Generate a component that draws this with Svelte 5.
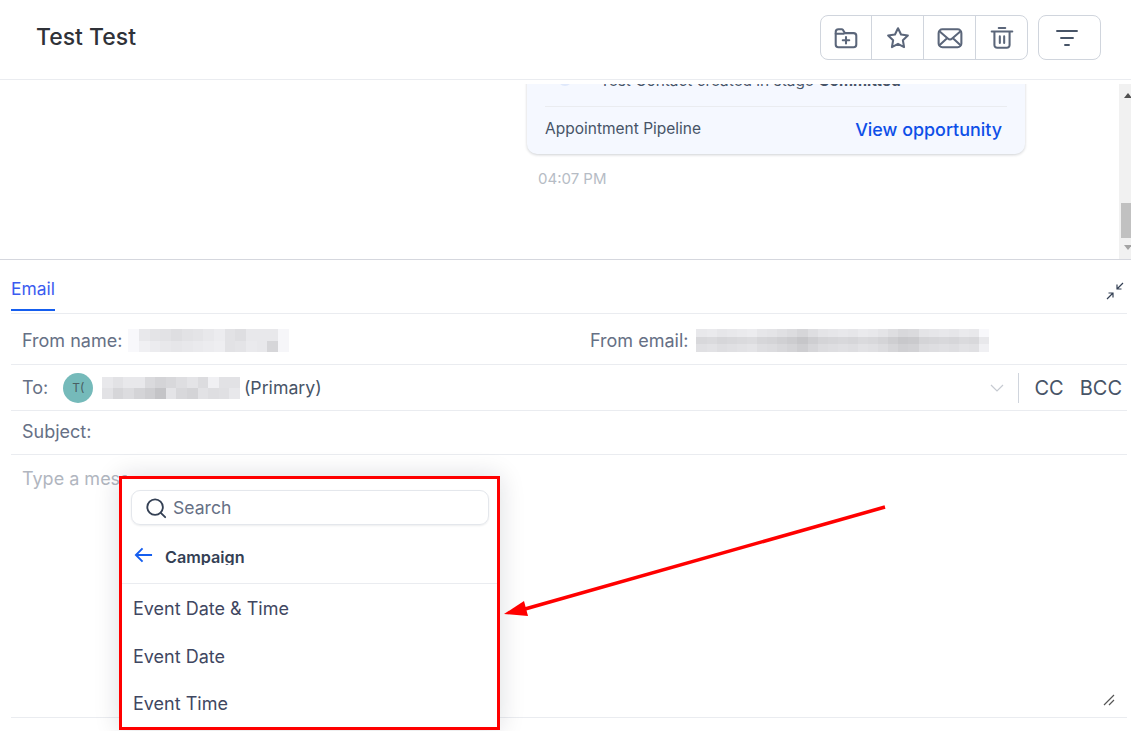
<script>
  const toCell = (v) => `rgb(${v},${v},${v + 3})`

  const nameBlur = [
    [248, 232, 228, 226, 222, 226, 228, 232, 236, 226, 222, 232, 232, 232, 246],
    [248, 240, 236, 232, 230, 232, 234, 236, 238, 226, 228, 234, 232, 214, 246]
  ]
  const emailBase = [216, 218, 214, 216, 218, 220, 214, 212, 208, 204, 198, 206, 212, 214, 216, 214, 218, 216, 212, 206, 200, 202, 212, 214, 216, 214, 218, 216, 232]
  const emailBlur = [
    emailBase.map((v) => Math.min(v + 16, 250)),
    emailBase,
    emailBase.map((v) => Math.min(v + 8, 246))
  ]
  const toBlur = [
    [232, 226, 232, 232, 218, 212, 216, 222, 228, 220, 240, 226, 226],
    [226, 214, 220, 212, 206, 196, 228, 216, 212, 226, 222, 224, 232]
  ]
  const items = ['Event Date & Time', 'Event Date', 'Event Time']
</script>

<div class="page">
  <header class="top">
    <h1>Test Test</h1>
    <div class="actions">
      <div class="group">
        <button aria-label="Move to folder">
          <svg viewBox="0 0 24 24"><path d="M2.5 7V18a2.5 2.5 0 0 0 2.5 2.5H19a2.5 2.5 0 0 0 2.5-2.5V10A2.5 2.5 0 0 0 19 7.5H11L9.2 4.6A1.5 1.5 0 0 0 8 4H5A2.5 2.5 0 0 0 2.5 6.5V10"/><path d="M2.5 8H10M12 11v6M9 14h6"/></svg>
        </button>
        <button aria-label="Star">
          <svg viewBox="0 0 24 24"><path d="M12 3l2.8 5.8 6.3.9-4.6 4.4 1.1 6.3L12 17.4l-5.6 3 1.1-6.3-4.6-4.4 6.3-.9z"/></svg>
        </button>
        <button aria-label="Mail">
          <svg viewBox="0 0 24 24"><rect x="1.5" y="4" width="21" height="16.5" rx="3.5"/><path d="M2.5 6l7.5 6.5a3 3 0 0 0 4 0L21.5 6M2.5 18.5l6.5-6M21.5 18.5l-6.5-6"/></svg>
        </button>
        <button aria-label="Delete">
          <svg viewBox="0 0 24 24"><path d="M2.5 6h19M9 2.8h6M5 6v12.5A2.5 2.5 0 0 0 7.5 21h9a2.5 2.5 0 0 0 2.5-2.5V6M10 10.5v6M14 10.5v6"/></svg>
        </button>
      </div>
      <button class="filter" aria-label="Filter">
        <svg viewBox="0 0 24 24"><path d="M2 5h20M6 12h12M10 19h4"/></svg>
      </button>
    </div>
  </header>

  <section class="thread">
    <div class="scroller">
      <div class="card">
        <p class="stage">
          <i class="stage-icon"></i>
          <span>Test Contact created in stage <b>Committed</b></span>
        </p>
        <div class="card-foot">
          <span>Appointment Pipeline</span>
          <a href="#top">View opportunity</a>
        </div>
      </div>
      <time>04:07 PM</time>
    </div>
    <div class="scrollbar">
      <i class="up"></i>
      <i class="thumb"></i>
      <i class="down"></i>
    </div>
  </section>

  <section class="composer">
    <div class="tabs">
      <span class="tab">Email</span>
      <svg class="shrink" viewBox="0 0 18 18"><path d="M17 1l-6 6M11 2.5V7h4.5M1 17l6-6M7 15.5V11H2.5"/></svg>
    </div>

    <div class="row from">
      <div class="half">
        <label>From name:</label>
        <div class="blur">
          {#each nameBlur as line}
            <div class="blur-line">
              {#each line as v}<i style="background:{toCell(v)}"></i>{/each}
            </div>
          {/each}
        </div>
      </div>
      <div class="half email">
        <label>From email:</label>
        <div class="blur">
          {#each emailBlur as line}
            <div class="blur-line fine">
              {#each line as v}<i style="background:{toCell(v)}"></i>{/each}
            </div>
          {/each}
        </div>
      </div>
    </div>

    <div class="row to">
      <label>To:</label>
      <span class="avatar">T(</span>
      <div class="blur">
        {#each toBlur as line}
          <div class="blur-line small">
            {#each line as v}<i style="background:{toCell(v)}"></i>{/each}
          </div>
        {/each}
      </div>
      <span class="primary">(Primary)</span>
      <svg class="chev" viewBox="0 0 14 8"><path d="M1 1l6 6 6-6"/></svg>
      <span class="cc">CC</span>
      <span class="bcc">BCC</span>
    </div>

    <div class="row subject"><label>Subject:</label></div>

    <div class="body">
      <span class="placeholder">Type a message</span>
      <svg class="grip" viewBox="0 0 12 12"><path d="M1 11L11 1M6 11l5-5"/></svg>
    </div>
  </section>

  <div class="menu">
    <div class="search">
      <svg viewBox="0 0 24 24"><circle cx="11" cy="11" r="8.5"/><path d="M17.5 17.5L22 22"/></svg>
      <span>Search</span>
    </div>
    <div class="crumb">
      <svg viewBox="0 0 20 18"><path d="M19 9H2M9 2L2 9l7 7"/></svg>
      <strong>Campaign</strong>
    </div>
    <ul>
      {#each items as item}
        <li>{item}</li>
      {/each}
    </ul>
  </div>

  <svg class="arrow" viewBox="0 0 1131 731">
    <path class="shaft" d="M885 507L525 609"/>
    <path class="head" d="M504 614L524 601L528 616Z"/>
  </svg>
</div>

<style>
  :global(body) {
    background: #fff;
  }

  .page {
    position: relative;
    width: 1131px;
    height: 731px;
    overflow: hidden;
    background: #fff;
    font-family: Inter, "Liberation Sans", sans-serif;
    color: #374151;
  }

  .top {
    display: flex;
    align-items: flex-start;
    justify-content: space-between;
    box-sizing: border-box;
    height: 80px;
    padding: 15px 30px 0 36px;
    border-bottom: 1px solid #eaecf0;
  }

  h1 {
    margin: 8px 0 0;
    font-size: 23px;
    line-height: 29px;
    font-weight: 500;
    color: #2f3238;
  }

  .actions {
    display: flex;
    gap: 10px;
  }

  .group {
    display: flex;
    border: 1px solid #d0d5dd;
    border-radius: 8px;
  }

  button {
    display: flex;
    align-items: center;
    justify-content: center;
    box-sizing: border-box;
    width: 52px;
    height: 43px;
    padding: 0;
    background: none;
    border: 0;
    border-left: 1px solid #d0d5dd;
  }

  .group button:first-child {
    width: 50px;
    border-left: 0;
  }

  button svg {
    width: 26px;
    height: 26px;
    fill: none;
    stroke: #5b667a;
    stroke-width: 1.9;
    stroke-linecap: round;
    stroke-linejoin: round;
  }

  .filter {
    width: 63px;
    height: 45px;
    padding-right: 6px;
    border: 1px solid #d0d5dd;
    border-radius: 8px;
  }

  .filter svg {
    width: 24px;
    height: 24px;
    stroke: #475467;
  }

  .thread {
    display: flex;
    box-sizing: border-box;
    height: 180px;
    padding-top: 4px;
    border-bottom: 1px solid #d5d7de;
  }

  .scroller {
    flex: 1;
    overflow: hidden;
    padding-left: 527px;
  }

  .card {
    box-sizing: border-box;
    width: 498px;
    height: 78px;
    margin-top: -8px;
    padding: 0 18px;
    background: #f5f8ff;
    border-radius: 0 0 10px 10px;
    box-shadow: 0 1px 3px rgba(16, 24, 40, 0.2);
  }

  .stage {
    display: flex;
    box-sizing: border-box;
    height: 30px;
    margin: 0;
    padding-left: 13px;
    font-size: 15.4px;
    line-height: 10px;
    color: #475467;
  }

  .stage-icon {
    display: block;
    width: 14px;
    height: 10px;
    margin-right: 28px;
    border-radius: 0 0 7px 7px;
    background: #dfe8fb;
  }

  .card-foot {
    display: flex;
    align-items: center;
    justify-content: space-between;
    height: 47px;
    padding-right: 5px;
    border-top: 1px solid #eaecf0;
    font-size: 15.5px;
    color: #475467;
  }

  .card-foot span {
    margin-top: -5px;
  }

  .card-foot a {
    margin-top: -2px;
    font-size: 17.9px;
    font-weight: 500;
    color: #0e4fe8;
    text-decoration: none;
  }

  time {
    display: block;
    margin: 15px 0 0 11px;
    font-size: 15px;
    color: #b6bcc5;
  }

  .scrollbar {
    position: relative;
    width: 12px;
    background: #f1f1f1;
    overflow: hidden;
  }

  .scrollbar i {
    position: absolute;
    display: block;
  }

  .up,
  .down {
    left: 5px;
    width: 0;
    height: 0;
    border: 4px solid transparent;
  }

  .up {
    top: 9px;
    border-top: 0;
    border-bottom: 5px solid #505050;
  }

  .down {
    bottom: 9px;
    border-bottom: 0;
    border-top: 5px solid #a3a3a3;
  }

  .thumb {
    top: 119px;
    left: 2px;
    width: 10px;
    height: 35px;
    background: #c1c1c1;
  }

  .composer {
    padding-left: 11px;
    padding-right: 4px;
  }

  .tabs {
    position: relative;
    display: flex;
    justify-content: space-between;
    box-sizing: border-box;
    height: 54px;
    padding-right: 3px;
    border-bottom: 1px solid #eaecf0;
  }

  .tab {
    box-sizing: border-box;
    height: 51px;
    padding-top: 18px;
    border-bottom: 2px solid #155eef;
    font-size: 17.4px;
    line-height: 21px;
    color: #3b5bf0;
  }

  .shrink {
    width: 18px;
    height: 18px;
    margin-top: 22px;
    fill: none;
    stroke: #344054;
    stroke-width: 1.2;
  }

  .row {
    display: flex;
    align-items: center;
    box-sizing: border-box;
    padding: 0 5px 0 11px;
    border-bottom: 1px solid #eaecf0;
    font-size: 18px;
  }

  label {
    color: #667085;
    white-space: nowrap;
  }

  .from {
    height: 51px;
    padding-top: 3px;
  }

  .half {
    display: flex;
    align-items: center;
    flex: none;
    width: 568px;
  }

  .half.email {
    width: auto;
  }

  .half .blur {
    margin-left: 6px;
  }

  .half.email .blur {
    margin-left: 8px;
  }

  .blur {
    flex: none;
  }

  .blur-line {
    display: flex;
  }

  .blur-line i {
    display: block;
    width: 10.7px;
    height: 11.5px;
  }

  .blur-line.fine i {
    width: 10.1px;
    height: 7.6px;
  }

  .blur-line.small i {
    width: 10.6px;
    height: 11px;
  }

  .to {
    height: 46px;
  }

  .avatar {
    display: flex;
    align-items: center;
    justify-content: center;
    width: 30px;
    height: 30px;
    margin: 0 9px 0 15px;
    border-radius: 50%;
    background: #75baba;
    font-size: 12px;
    color: #4a5e63;
  }

  .primary {
    margin-left: 4px;
    font-size: 17.7px;
    color: #475467;
  }

  .chev {
    width: 14px;
    height: 8px;
    margin-left: auto;
    fill: none;
    stroke: #c6cad1;
    stroke-width: 1.2;
  }

  .cc {
    margin-left: 14px;
    padding: 3px 0 3px 15px;
    border-left: 1px solid #d0d5dd;
    font-size: 20px;
    color: #475467;
  }

  .bcc {
    margin-left: 16px;
    font-size: 20px;
    color: #475467;
  }

  .subject {
    height: 44px;
    padding-bottom: 2px;
  }

  .body {
    position: relative;
    box-sizing: border-box;
    height: 263px;
    padding: 13px 11px;
    border-bottom: 1px solid #eaecf0;
  }

  .placeholder {
    display: inline-block;
    width: 105px;
    overflow: hidden;
    white-space: nowrap;
    font-size: 18px;
    color: #b1b6bf;
  }

  .grip {
    position: absolute;
    right: 12px;
    bottom: 11px;
    width: 12px;
    height: 12px;
    fill: none;
    stroke: #555;
    stroke-width: 1.2;
  }

  .menu {
    position: absolute;
    left: 119px;
    top: 476px;
    box-sizing: border-box;
    width: 381px;
    height: 254px;
    background: #fff;
    border: 3px solid #f00;
    box-shadow: 0 0 24px rgba(16, 24, 40, 0.14);
  }

  .search {
    display: flex;
    align-items: center;
    gap: 6px;
    box-sizing: border-box;
    height: 35px;
    margin: 11px 8px 0 9px;
    padding-left: 13px;
    border: 1px solid #e4e7ec;
    border-radius: 9px;
    box-shadow: 0 1px 2px rgba(16, 24, 40, 0.08);
    font-size: 17.6px;
    color: #667085;
  }

  .search svg {
    width: 22px;
    height: 22px;
    fill: none;
    stroke: #344054;
    stroke-width: 2;
    stroke-linecap: round;
  }

  .crumb {
    display: flex;
    align-items: center;
    gap: 12px;
    box-sizing: border-box;
    height: 59px;
    padding: 4px 0 0 12px;
    border-bottom: 1px solid #eaecf0;
  }

  .crumb svg {
    width: 19px;
    height: 18px;
    margin-top: -3px;
    fill: none;
    stroke: #155eef;
    stroke-width: 2;
  }

  .crumb strong {
    display: block;
    height: 18px;
    overflow: hidden;
    font-size: 16.2px;
    line-height: 20px;
    font-weight: 600;
    color: #344054;
  }

  ul {
    margin: 0;
    padding: 0;
    list-style: none;
  }

  li {
    height: 47.5px;
    padding: 0 0 0 11px;
    font-size: 18px;
    line-height: 50px;
    color: #3f4761;
  }

  .arrow {
    position: absolute;
    inset: 0;
    width: 1131px;
    height: 731px;
    pointer-events: none;
  }

  .shaft {
    fill: none;
    stroke: #f00;
    stroke-width: 3.5;
  }

  .head {
    fill: #f00;
  }
</style>
